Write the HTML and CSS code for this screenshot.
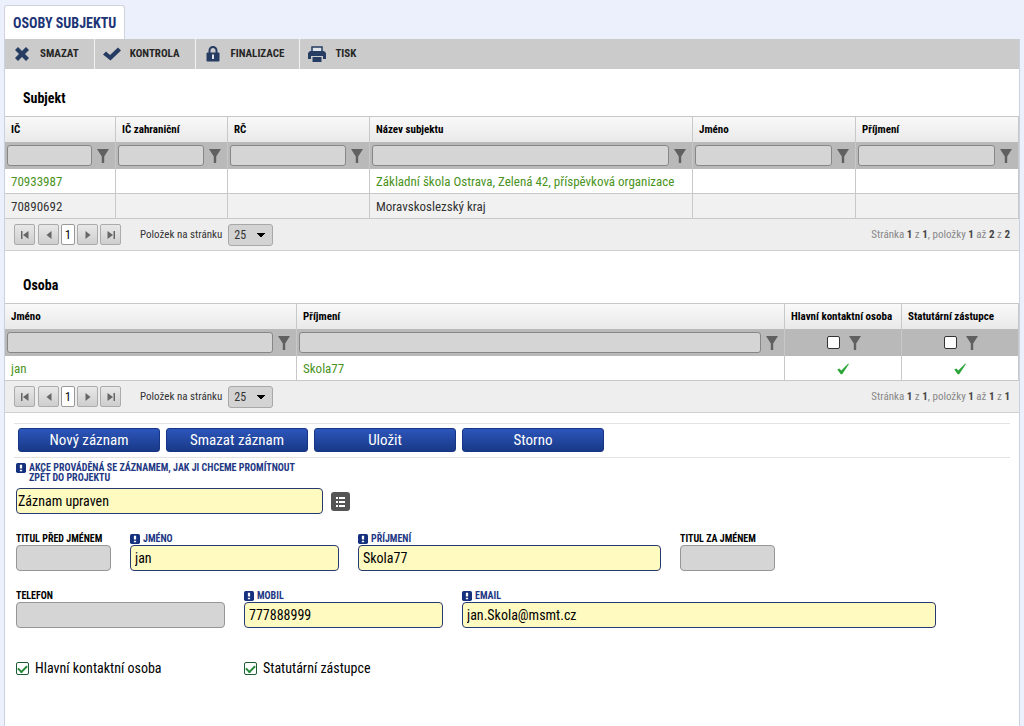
FILE: index.html
```html
<!DOCTYPE html>
<html lang="cs">
<head>
<meta charset="utf-8">
<title>Osoby subjektu</title>
<link rel="stylesheet" href="styles.css">
</head>
<body>
<svg class="sprite" aria-hidden="true">
  <symbol id="funnel" viewBox="0 0 12 14"><path d="M0 0h12L7.200 7.500V14H4.800V7.500z" fill="#606060"/></symbol>
  <symbol id="first" viewBox="0 0 10 10"><path d="M1 1h1.500v8H1zM8.500 1v8L3 5z" fill="#666"/></symbol>
  <symbol id="prev" viewBox="0 0 10 10"><path d="M7.500 1v8L2.500 5z" fill="#666"/></symbol>
  <symbol id="next" viewBox="0 0 10 10"><path d="M2.500 1v8l5-4z" fill="#666"/></symbol>
  <symbol id="last" viewBox="0 0 10 10"><path d="M7.500 1H9v8H7.500zM1.500 1v8L7 5z" fill="#666"/></symbol>
  <symbol id="tick" viewBox="0 0 12 12"><path d="M0.300 6.500L2.300 5.500 4.300 7.500 11.300 0.500 11.800 1.200 5.200 11.200H3.800z" fill="#2ca538"/></symbol>
  <symbol id="required" viewBox="0 0 9 9"><rect width="9" height="9" rx="1.500" fill="#14307f"/><path d="M3.500 1.500h2v3.500h-2zM3.500 6h2v1.500h-2z" fill="#fff"/></symbol>
</svg>

<nav class="tabs"><a class="tab" href="#osoby">OSOBY SUBJEKTU</a></nav>

<main class="panel" id="osoby">
  <div class="toolbar">
    <button class="tool" type="button"><svg class="tool-icon" viewBox="0 0 18 18"><path d="M5 2L9 6l4-4 3 3-4 4 4 4-3 3-4-4-4 4-3-3 4-4-4-4z" fill="#263c63"/></svg>SMAZAT</button>
    <button class="tool" type="button"><svg class="tool-icon" viewBox="0 0 18 18"><path d="M0 9.500L3 6.500 7 10 15 2.500 18 5.500 7.500 15.500z" fill="#263c63"/></svg>KONTROLA</button>
    <button class="tool" type="button"><svg class="tool-icon" viewBox="0 0 18 18"><path d="M5.500 8V5.500a3.500 3.500 0 0 1 7 0V8" fill="none" stroke="#263c63" stroke-width="2"/><rect x="2.500" y="7.500" width="13" height="9" rx="1" fill="#263c63"/><path d="M8 9.500h2V14H8z" fill="#dfe3ea"/></svg>FINALIZACE</button>
    <button class="tool" type="button"><svg class="tool-icon" viewBox="0 0 18 18"><path d="M4 2h10v5H4z" fill="#dfe3ea" stroke="#263c63" stroke-width="1.500"/><path d="M2 6h14l2 2v6h-3v-3H3v3H0V8zM4.500 12h9v5h-9z" fill="#263c63"/></svg>TISK</button>
  </div>

  <section>
    <h2 class="title">Subjekt</h2>
    <table class="grid">
      <colgroup><col class="w-ic"><col class="w-icz"><col class="w-rc"><col><col class="w-name"><col class="w-name"></colgroup>
      <thead>
        <tr><th>IČ</th><th>IČ zahraniční</th><th>RČ</th><th>Název subjektu</th><th>Jméno</th><th>Příjmení</th></tr>
        <tr class="filters">
          <td><div class="filter"><input class="filter-box" aria-label="IČ"><svg class="funnel"><use href="#funnel"/></svg></div></td>
          <td><div class="filter"><input class="filter-box" aria-label="IČ zahraniční"><svg class="funnel"><use href="#funnel"/></svg></div></td>
          <td><div class="filter"><input class="filter-box" aria-label="RČ"><svg class="funnel"><use href="#funnel"/></svg></div></td>
          <td><div class="filter"><input class="filter-box" aria-label="Název subjektu"><svg class="funnel"><use href="#funnel"/></svg></div></td>
          <td><div class="filter"><input class="filter-box" aria-label="Jméno"><svg class="funnel"><use href="#funnel"/></svg></div></td>
          <td><div class="filter"><input class="filter-box" aria-label="Příjmení"><svg class="funnel"><use href="#funnel"/></svg></div></td>
        </tr>
      </thead>
      <tbody>
        <tr class="selected"><td>70933987</td><td></td><td></td><td>Základní škola Ostrava, Zelená 42, příspěvková organizace</td><td></td><td></td></tr>
        <tr class="alt"><td>70890692</td><td></td><td></td><td>Moravskoslezský kraj</td><td></td><td></td></tr>
      </tbody>
    </table>
    <div class="pager">
      <div class="pages">
        <button class="page-btn" type="button" aria-label="První"><svg class="arrow"><use href="#first"/></svg></button>
        <button class="page-btn" type="button" aria-label="Předchozí"><svg class="arrow"><use href="#prev"/></svg></button>
        <button class="page-current" type="button">1</button>
        <button class="page-btn" type="button" aria-label="Další"><svg class="arrow"><use href="#next"/></svg></button>
        <button class="page-btn page-last" type="button" aria-label="Poslední"><svg class="arrow"><use href="#last"/></svg></button>
      </div>
      <label class="size-label" for="size1">Položek na stránku</label>
      <select class="size" id="size1"><option>25</option></select>
      <p class="summary">Stránka <b>1</b> z <b>1</b>, položky <b>1</b> až <b>2</b> z <b>2</b></p>
    </div>
  </section>

  <section class="persons">
    <h2 class="title">Osoba</h2>
    <table class="grid">
      <colgroup><col class="w-first"><col><col class="w-flag"><col class="w-flag"></colgroup>
      <thead>
        <tr><th>Jméno</th><th>Příjmení</th><th>Hlavní kontaktní osoba</th><th>Statutární zástupce</th></tr>
        <tr class="filters">
          <td><div class="filter"><input class="filter-box" aria-label="Jméno"><svg class="funnel"><use href="#funnel"/></svg></div></td>
          <td><div class="filter"><input class="filter-box" aria-label="Příjmení"><svg class="funnel"><use href="#funnel"/></svg></div></td>
          <td><div class="filter flag"><input class="check" type="checkbox" aria-label="Hlavní kontaktní osoba"><svg class="funnel"><use href="#funnel"/></svg></div></td>
          <td><div class="filter flag"><input class="check" type="checkbox" aria-label="Statutární zástupce"><svg class="funnel"><use href="#funnel"/></svg></div></td>
        </tr>
      </thead>
      <tbody>
        <tr class="selected"><td>jan</td><td>Skola77</td><td><svg class="tick"><use href="#tick"/></svg></td><td><svg class="tick"><use href="#tick"/></svg></td></tr>
      </tbody>
    </table>
    <div class="pager">
      <div class="pages">
        <button class="page-btn" type="button" aria-label="První"><svg class="arrow"><use href="#first"/></svg></button>
        <button class="page-btn" type="button" aria-label="Předchozí"><svg class="arrow"><use href="#prev"/></svg></button>
        <button class="page-current" type="button">1</button>
        <button class="page-btn" type="button" aria-label="Další"><svg class="arrow"><use href="#next"/></svg></button>
        <button class="page-btn page-last" type="button" aria-label="Poslední"><svg class="arrow"><use href="#last"/></svg></button>
      </div>
      <label class="size-label" for="size2">Položek na stránku</label>
      <select class="size" id="size2"><option>25</option></select>
      <p class="summary">Stránka <b>1</b> z <b>1</b>, položky <b>1</b> až <b>1</b> z <b>1</b></p>
    </div>
  </section>

  <form class="form">
    <div class="actions">
      <button class="action" type="button">Nový záznam</button>
      <button class="action" type="button">Smazat záznam</button>
      <button class="action" type="button">Uložit</button>
      <button class="action" type="button">Storno</button>
    </div>
    <div class="operation">
      <label class="label must" for="akce"><svg class="required"><use href="#required"/></svg><span>AKCE PROVÁDĚNÁ SE ZÁZNAMEM, JAK JI CHCEME PROMÍTNOUT<br>ZPĚT DO PROJEKTU</span></label>
      <div class="picker">
        <input class="box must-box picker-box" id="akce" value="Záznam upraven">
        <button class="list-btn" type="button" aria-label="Vybrat"><svg class="list-icon" viewBox="0 0 19 19"><path d="M5 5h2v2H5zM8 5h6v2H8zM5 9h2v2H5zM8 9h6v2H8zM5 13h2v2H5zM8 13h6v2H8z" fill="#fff"/></svg></button>
      </div>
    </div>
    <div class="fields">
      <div class="field f-short"><label class="label" for="titul1">TITUL PŘED JMÉNEM</label><input class="box" id="titul1"></div>
      <div class="field f-phone"><label class="label must" for="jmeno"><svg class="required"><use href="#required"/></svg>JMÉNO</label><input class="box must-box" id="jmeno" value="jan"></div>
      <div class="field f-surname"><label class="label must" for="prijmeni"><svg class="required"><use href="#required"/></svg>PŘÍJMENÍ</label><input class="box must-box" id="prijmeni" value="Skola77"></div>
      <div class="field f-short"><label class="label" for="titul2">TITUL ZA JMÉNEM</label><input class="box" id="titul2"></div>
    </div>
    <div class="fields">
      <div class="field f-phone"><label class="label" for="telefon">TELEFON</label><input class="box" id="telefon"></div>
      <div class="field f-mobile"><label class="label must" for="mobil"><svg class="required"><use href="#required"/></svg>MOBIL</label><input class="box must-box" id="mobil" value="777888999"></div>
      <div class="field f-email"><label class="label must" for="email"><svg class="required"><use href="#required"/></svg>EMAIL</label><input class="box must-box" id="email" value="jan.Skola@msmt.cz"></div>
    </div>
    <div class="checks">
      <label class="option"><input class="check" type="checkbox" checked>Hlavní kontaktní osoba</label>
      <label class="option"><input class="check" type="checkbox" checked>Statutární zástupce</label>
    </div>
  </form>
</main>
</body>
</html>
```
FILE: styles.css
```css
* { box-sizing: border-box; }
body {
  margin: 0;
  padding: 5px 4px 0;
  min-height: 100vh;
  display: flex;
  flex-direction: column;
  background: #ecf0fd;
  color: #000;
  font: 14px/16px "Roboto Condensed", "Liberation Sans Narrow", Roboto, sans-serif;
}
button, input, select { font: inherit; color: inherit; margin: 0; }
svg { display: block; flex: none; }
.sprite { position: absolute; width: 0; height: 0; }

.tabs { display: flex; }
.tab {
  height: 34px;
  padding: 0 8px;
  border: 1px solid #d0d3dc;
  border-bottom: 0;
  border-radius: 3px 3px 0 0;
  background: #fff;
  color: #1d3576;
  font-size: 14px;
  font-weight: bold;
  line-height: 34px;
  text-decoration: none;
}
.panel { flex: 1; background: #fff; border: solid #ccd1de; border-width: 0 1px; }

.toolbar { display: flex; height: 30px; background: #cbcbcb; }
.tool {
  display: flex;
  align-items: center;
  gap: 9px;
  padding: 0 15px 0 8px;
  border: 0;
  border-right: 1px solid #f2f2f2;
  background: none;
  color: #262626;
  font-size: 11px;
  font-weight: bold;
}
.tool:last-child { border-right: 0; }
.tool-icon { width: 18px; height: 18px; }

.title { margin: 0; padding: 19px 18px 8px; font-size: 14px; line-height: 20px; font-weight: bold; }
.persons { padding-top: 5px; }
.grid { width: 100%; border-collapse: separate; border-spacing: 0; table-layout: fixed; border-top: 1px solid #c8c8c8; }
.w-ic { width: 111px; }
.w-icz { width: 112px; }
.w-rc { width: 142px; }
.w-name { width: 163px; }
.w-first { width: 292px; }
.w-flag { width: 117px; }
.grid th, .grid td { border-right: 1px solid #c8c8c8; padding: 0 6px; text-align: left; white-space: nowrap; }
.grid th { height: 25px; background: linear-gradient(#f9f9f9, #e9e9e9); font-size: 11px; font-weight: bold; }
.grid .filters td { height: 27px; padding: 0 6px 0 2px; background: #b9b9b9; }
.grid tbody td { height: 25px; padding-top: 1px; border-bottom: 1px solid #c8c8c8; color: #333; font-size: 13px; }
.grid .alt td { background: #f1f1f1; }
.grid .selected td { color: #4a9322; }
.filter { display: flex; align-items: center; gap: 5px; }
.filter-box {
  flex: 1;
  min-width: 0;
  height: 21px;
  border: 1px solid #878787;
  border-radius: 3px;
  background: #d5d5d5;
}
.funnel { width: 12px; height: 14px; }
.flag { justify-content: center; gap: 9px; padding-left: 6px; }
.tick { width: 12px; height: 12px; margin: 0 auto; }

.pager {
  display: flex;
  align-items: center;
  height: 32px;
  padding: 0 9px;
  background: #eee;
  border-bottom: 1px solid #d0d0d0;
  font-size: 11px;
  color: #333;
}
.pages { display: flex; gap: 2px; width: 107px; margin-right: 19px; font-size: 12px; }
.page-btn {
  display: flex;
  align-items: center;
  justify-content: center;
  width: 21px;
  height: 21px;
  padding: 0;
  border: 1px solid #ababab;
  border-radius: 2px;
  background: linear-gradient(#e8e8e8, #cecece);
}
.page-btn:first-child { margin-right: 1px; }
.page-last { margin-left: auto; }
.arrow { width: 10px; height: 10px; }
.page-current { width: 14px; padding: 0; border: 1px solid #999; border-radius: 2px; background: #fff; color: #000; }
.size-label { margin-right: 6px; }
.size {
  width: 45px;
  height: 22px;
  padding: 0 5px;
  appearance: none;
  border: 1px solid #a8a8a8;
  border-radius: 3px;
  background: conic-gradient(from -45deg at 50% 100%, #000 90deg, transparent 0) 28px 8px / 8px 4px no-repeat, #d3d3d3;
  font-size: 12px;
}
.summary { margin: 0 0 0 auto; color: #888; }
.summary b { color: #444; font-weight: bold; }

.form { padding: 10px 9px; }
.actions { display: flex; gap: 6px; padding: 4px 4px 5px; border: solid #e3e3e3; border-width: 1px 0; }
.action {
  width: 142px;
  height: 24px;
  padding: 0;
  border: 1px solid #173585;
  border-radius: 3px;
  background: linear-gradient(#2d56bb, #183987);
  color: #fff;
  font-size: 15px;
}
.label { display: flex; gap: 3px; font-size: 10px; line-height: 10px; font-weight: bold; white-space: nowrap; }
.must { color: #1e3884; }
.required { width: 10px; height: 10px; }
.box {
  width: 100%;
  height: 26px;
  padding: 0 4px;
  border: 1px solid #969696;
  border-radius: 4px;
  background: #d5d5d5;
}
.must-box { border-color: #273a70; background: #fffac0; }
.operation { padding: 5px 2px 0; }
.picker { display: flex; align-items: center; gap: 8px; margin-top: 5px; }
.picker-box { width: 307px; padding: 0 1px; }
.list-btn { padding: 0; border: 0; border-radius: 3px; background: #555; }
.list-icon { width: 19px; height: 19px; }
.fields { display: flex; gap: 19px; padding: 20px 2px 0; }
.field { display: flex; flex-direction: column; gap: 1px; }
.f-short { width: 95px; }
.f-phone { width: 209px; }
.f-surname { width: 303px; }
.f-mobile { width: 199px; }
.f-email { width: 474px; }
.checks { display: flex; padding: 32px 2px 0; }
.option { display: flex; align-items: center; gap: 6px; width: 228px; }
.check {
  appearance: none;
  width: 13px;
  height: 13px;
  border: 1px solid #333;
  border-radius: 2px;
  background: #fff;
  display: grid;
  place-items: center;
}
.check:checked { border-color: #1d5b35; }
.check:checked::before {
  content: "";
  width: 7px;
  height: 4px;
  border: solid #278a3c;
  border-width: 0 0 2px 2px;
  transform: rotate(-45deg);
}
```
